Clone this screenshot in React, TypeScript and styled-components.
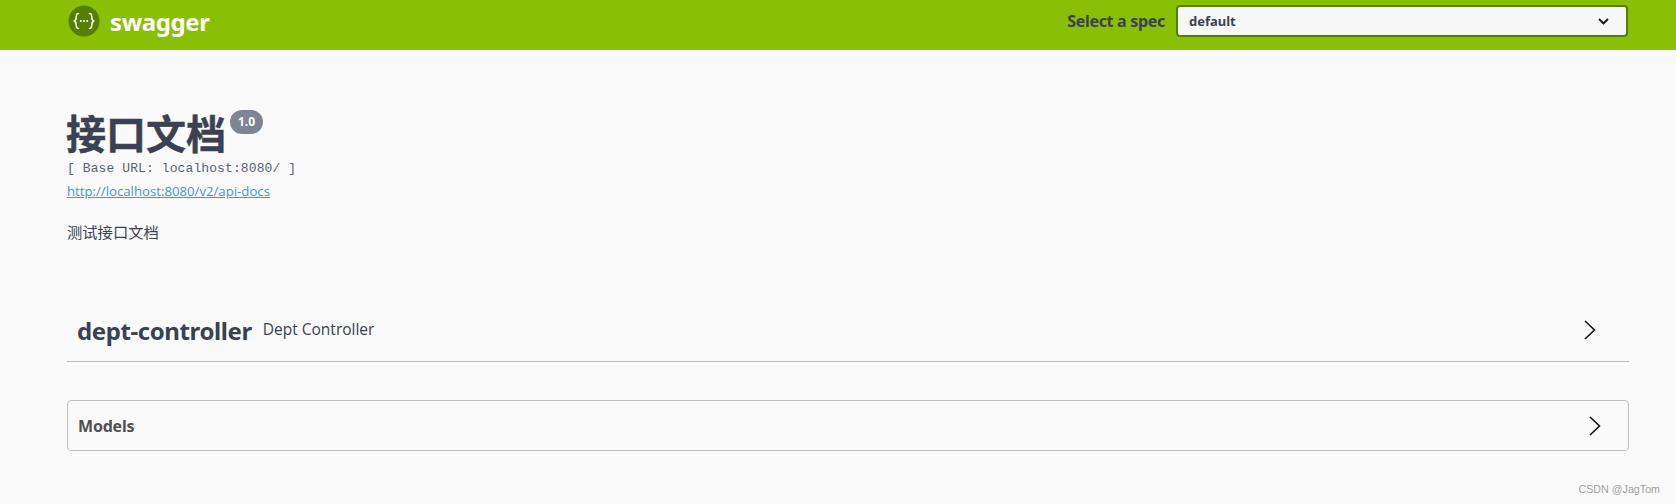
import React from "react";
import styled, { createGlobalStyle } from "styled-components";

const Global = createGlobalStyle`
  html, body { margin: 0; padding: 0; background: #fafafa; }
  body { width: 1676px; height: 504px; overflow: hidden; position: relative; font-family: "Open Sans", "Noto Sans CJK SC", sans-serif; color: #3b4151; }
`;
const Topbar = styled.header`
  height: 50px; background: #89bf04; box-sizing: border-box;
  padding: 0 48px 8px 68px; display: flex; align-items: center; justify-content: space-between;
`;
const Brand = styled.a`
  display: flex; align-items: center; gap: 10px;
  color: #fff; font: 700 24px "Noto Sans", sans-serif; letter-spacing: -0.4px;
`;
const Spec = styled.div`display: flex; align-items: center; gap: 11px;`;
const SpecLabel = styled.span`font: 700 16px "Noto Sans", sans-serif; color: #3b4151; letter-spacing: -0.3px;`;
const SpecSelect = styled.div`
  width: 452px; height: 32px; box-sizing: border-box;
  border: 2px solid #547f00; border-radius: 4px; background: #f7f7f7;
  display: flex; align-items: center; justify-content: space-between; padding: 0 17px 0 11px;
  font: 700 13px "Noto Sans", sans-serif; color: #3b4151;
`;
const Wrapper = styled.main`padding: 0 47px 0 67px;`;
const Info = styled.section`padding-top: 60px;`;
const TitleRow = styled.div`display: flex; align-items: flex-start; height: 50px;`;
const Title = styled.h1`
  margin: 0 0 0 -1px; font: 700 40px/44px "Noto Sans CJK SC", sans-serif; color: #3b4151;
  -webkit-text-stroke: 0.5px #3b4151;
`;
const Badge = styled.span`
  margin-left: 4px; height: 24px; width: 33px; border-radius: 12px; background: #7d8492; color: #fff;
  font: 700 12px/24px "Noto Sans", sans-serif; text-align: center;
`;
const BaseUrl = styled.pre`margin: 0; height: 20px; font: 400 13px/18px "Liberation Mono", monospace; letter-spacing: 0.1px; color: #5a6070;`;
const DocsLink = styled.a`
  display: block; height: 27px; font: 400 13.2px/22px "Open Sans", sans-serif; color: #4990e2; text-decoration: underline;
`;
const Description = styled.p`margin: 14px 0 0; font: 400 15.3px/20px "Noto Sans CJK SC", sans-serif; color: #3b4151;`;
const Tag = styled.div`
  margin-top: 61px; height: 60px; box-sizing: border-box; border-bottom: 1px solid #bcbcbc;
  display: flex; align-items: center; padding: 0 33px 3px 10px;
`;
const TagName = styled.h3`margin: 0; font: 700 24px "Noto Sans", sans-serif; color: #3b4151; letter-spacing: -0.4px;`;
const TagDesc = styled.small`flex: 1; margin: -3px 0 0 11px; font: 400 15.5px "Open Sans", sans-serif; color: #3b4151;`;
const Models = styled.section`
  margin-top: 38px; height: 51px; box-sizing: border-box; border: 1px solid #bfbfbf; border-radius: 4px;
  display: flex; align-items: center; justify-content: space-between; padding: 0 27px 0 10px;
`;
const ModelsTitle = styled.h4`margin: 0; font: 700 16px "Noto Sans", sans-serif; color: #505050; letter-spacing: -0.2px;`;
const Watermark = styled.span`
  position: absolute; right: 16px; bottom: 9px; font: 400 10.7px "Liberation Sans", sans-serif; color: #a0a0a0;
`;

const Logo = () => (
  <svg width="32" height="32" viewBox="0 0 32 32" aria-hidden>
    <circle cx="16" cy="16" r="15.5" fill="#547f00" />
    <g fill="none" stroke="#fff" strokeWidth="1.6" strokeLinecap="round">
      <path d="M10.5 8.5c-2 0-2.2 1.2-2.2 3 0 2.4-.4 3.6-1.8 4.5 1.4.9 1.8 2.1 1.8 4.5 0 1.8.2 3 2.2 3" />
      <path d="M21.5 8.5c2 0 2.2 1.2 2.2 3 0 2.4.4 3.6 1.8 4.5-1.4.9-1.8 2.1-1.8 4.5 0 1.8-.2 3-2.2 3" />
    </g>
    <g fill="#fff">
      <circle cx="12.8" cy="16" r="1" />
      <circle cx="16" cy="16" r="1" />
      <circle cx="19.2" cy="16" r="1" />
    </g>
  </svg>
);
const Chevron = () => (
  <svg width="12" height="20" viewBox="0 0 12 20" aria-hidden>
    <path d="M1 1l9.5 9L1 19" fill="none" stroke="#111" strokeWidth="1.6" />
  </svg>
);
const Caret = () => (
  <svg width="11" height="7" viewBox="0 0 11 7" aria-hidden>
    <path d="M1 1l4.5 4.5L10 1" fill="none" stroke="#111" strokeWidth="1.8" />
  </svg>
);

export default function App() {
  return (
    <>
      <Global />
      <Topbar>
        <Brand><Logo />swagger</Brand>
        <Spec>
          <SpecLabel>Select a spec</SpecLabel>
          <SpecSelect>default<Caret /></SpecSelect>
        </Spec>
      </Topbar>
      <Wrapper>
        <Info>
          <TitleRow><Title>接口文档</Title><Badge>1.0</Badge></TitleRow>
          <BaseUrl>[ Base URL: localhost:8080/ ]</BaseUrl>
          <DocsLink>http://localhost:8080/v2/api-docs</DocsLink>
          <Description>测试接口文档</Description>
        </Info>
        <Tag>
          <TagName>dept-controller</TagName>
          <TagDesc>Dept Controller</TagDesc>
          <Chevron />
        </Tag>
        <Models>
          <ModelsTitle>Models</ModelsTitle>
          <Chevron />
        </Models>
      </Wrapper>
      <Watermark>CSDN @JagTom</Watermark>
    </>
  );
}
